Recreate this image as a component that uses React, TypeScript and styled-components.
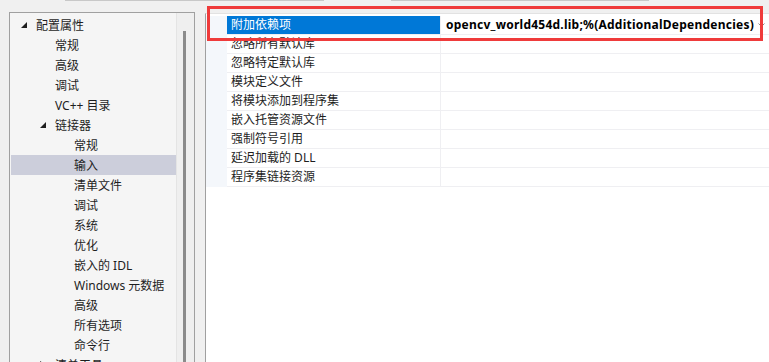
import React from "react"
import styled, { createGlobalStyle } from "styled-components"

const GlobalStyle = createGlobalStyle`
    html, body {
        margin: 0;
        padding: 0;
        background: #f0f0f0;
        overflow: hidden;
    }
    body {
        font-family: "Noto Sans", "Noto Sans CJK SC", sans-serif;
        font-size: 12px;
        color: #1e1e1e;
    }
`

const Page = styled.div`
    position: relative;
    width: 769px;
    height: 362px;
    overflow: hidden;
    background: #f0f0f0;
    display: flex;
    flex-direction: column;
`

const TopStrip = styled.div`
    display: flex;
    gap: 67px;
    padding-left: 65px;
    height: 12px;
    flex-shrink: 0;
`

const StripLine = styled.div<{ $w: number }>`
    width: ${p => p.$w}px;
    height: 1px;
    background: #c8c8c8;
`

const Main = styled.div`
    flex: 1;
    display: flex;
    gap: 10px;
    padding-left: 9px;
    min-height: 0;
`

/* ---------- tree ---------- */

const TreePanel = styled.div`
    width: 186px;
    box-sizing: border-box;
    border: 1px solid #a0a0a0;
    border-bottom: none;
    display: flex;
    background: #f5f5f5;
`

const TreeList = styled.ul`
    list-style: none;
    margin: 0;
    padding: 2px 0 0 0;
    flex: 1;
    overflow: hidden;
`

const TreeRow = styled.li<{ $level: number; $selected?: boolean }>`
    display: flex;
    align-items: center;
    height: 20px;
    padding-left: ${p => 10 + p.$level * 19}px;
    margin-left: 1px;
    background: ${p => (p.$selected ? "#cccedb" : "transparent")};
    white-space: nowrap;
`

const Caret = styled.span`
    width: 15px;
    flex-shrink: 0;
    display: flex;
    align-items: center;
`

const ScrollTrack = styled.div`
    position: relative;
    width: 17px;
    flex-shrink: 0;
    background: #efefef;
    border-left: 1px solid #e4e4e4;
`

const ScrollThumb = styled.div`
    position: absolute;
    left: 6px;
    top: 18px;
    bottom: 0;
    width: 3px;
    background: #8b8b8b;
`

/* ---------- property grid ---------- */

const GridPanel = styled.div`
    flex: 1;
    margin-top: 1px;
    background: #ffffff;
    border-left: 1px solid #a0a0a0;
    border-top: 1px solid #e2e2e2;
    padding-top: 2px;
`

const GridRow = styled.div`
    display: flex;
    height: 19px;
`

const Gutter = styled.div`
    width: 21px;
    flex-shrink: 0;
    background: #f4f7fb;
`

const NameCell = styled.div<{ $selected?: boolean }>`
    width: 214px;
    flex-shrink: 0;
    box-sizing: border-box;
    padding-left: 4px;
    line-height: 18px;
    border-bottom: 1px solid #efeff2;
    border-right: 1px solid #efeff2;
    background: ${p => (p.$selected ? "#0078d7" : "#ffffff")};
    color: ${p => (p.$selected ? "#ffffff" : "#1e1e1e")};
    white-space: nowrap;
`

const ValueCell = styled.div`
    flex: 1;
    display: flex;
    align-items: center;
    justify-content: space-between;
    box-sizing: border-box;
    padding: 0 4px 0 5px;
    line-height: 18px;
    border-bottom: 1px solid #efeff2;
    white-space: nowrap;
`

const ValueText = styled.span`
    font-weight: 700;
    letter-spacing: 0.24px;
    color: #000000;
`

const Highlight = styled.div`
    position: absolute;
    left: 207px;
    top: 6px;
    width: 556px;
    height: 35px;
    box-sizing: border-box;
    border: 3px solid #ef3b3b;
    pointer-events: none;
`

type Node = { label: string; level: number; caret?: "open" | "closed"; selected?: boolean }

const tree: Node[] = [
    { label: "配置属性", level: 0, caret: "open" },
    { label: "常规", level: 1 },
    { label: "高级", level: 1 },
    { label: "调试", level: 1 },
    { label: "VC++ 目录", level: 1 },
    { label: "链接器", level: 1, caret: "open" },
    { label: "常规", level: 2 },
    { label: "输入", level: 2, selected: true },
    { label: "清单文件", level: 2 },
    { label: "调试", level: 2 },
    { label: "系统", level: 2 },
    { label: "优化", level: 2 },
    { label: "嵌入的 IDL", level: 2 },
    { label: "Windows 元数据", level: 2 },
    { label: "高级", level: 2 },
    { label: "所有选项", level: 2 },
    { label: "命令行", level: 2 },
    { label: "清单工具", level: 1, caret: "closed" },
]

const props = [
    "忽略所有默认库",
    "忽略特定默认库",
    "模块定义文件",
    "将模块添加到程序集",
    "嵌入托管资源文件",
    "强制符号引用",
    "延迟加载的 DLL",
    "程序集链接资源",
]

const CaretIcon = ({ kind }: { kind: "open" | "closed" }) =>
    kind === "open" ? (
        <svg width="6" height="6" viewBox="0 0 6 6">
            <polygon points="6,0 6,6 0,6" fill="#1e1e1e" />
        </svg>
    ) : (
        <svg width="5" height="8" viewBox="0 0 5 8">
            <polygon points="0.5,0.5 4.5,4 0.5,7.5" fill="none" stroke="#444" strokeWidth="1" />
        </svg>
    )

const Chevron = () => (
    <svg width="7" height="4" viewBox="0 0 7 4">
        <polyline points="0.5,0.5 3.5,3.5 6.5,0.5" fill="none" stroke="#8a8a8a" strokeWidth="1" />
    </svg>
)

const App: React.FC = () => {
    return (
        <Page>
            <GlobalStyle />
            <TopStrip>
                <StripLine $w={259} />
                <StripLine $w={258} />
            </TopStrip>
            <Main>
                <TreePanel>
                    <TreeList>
                        {tree.map((n, i) => (
                            <TreeRow key={i} $level={n.level} $selected={n.selected}>
                                <Caret>{n.caret && <CaretIcon kind={n.caret} />}</Caret>
                                {n.label}
                            </TreeRow>
                        ))}
                    </TreeList>
                    <ScrollTrack>
                        <ScrollThumb />
                    </ScrollTrack>
                </TreePanel>
                <GridPanel>
                    <GridRow>
                        <Gutter />
                        <NameCell $selected>附加依赖项</NameCell>
                        <ValueCell>
                            <ValueText>opencv_world454d.lib;%(AdditionalDependencies)</ValueText>
                            <Chevron />
                        </ValueCell>
                    </GridRow>
                    {props.map(p => (
                        <GridRow key={p}>
                            <Gutter />
                            <NameCell>{p}</NameCell>
                            <ValueCell />
                        </GridRow>
                    ))}
                </GridPanel>
            </Main>
            <Highlight />
        </Page>
    )
}

export default App
